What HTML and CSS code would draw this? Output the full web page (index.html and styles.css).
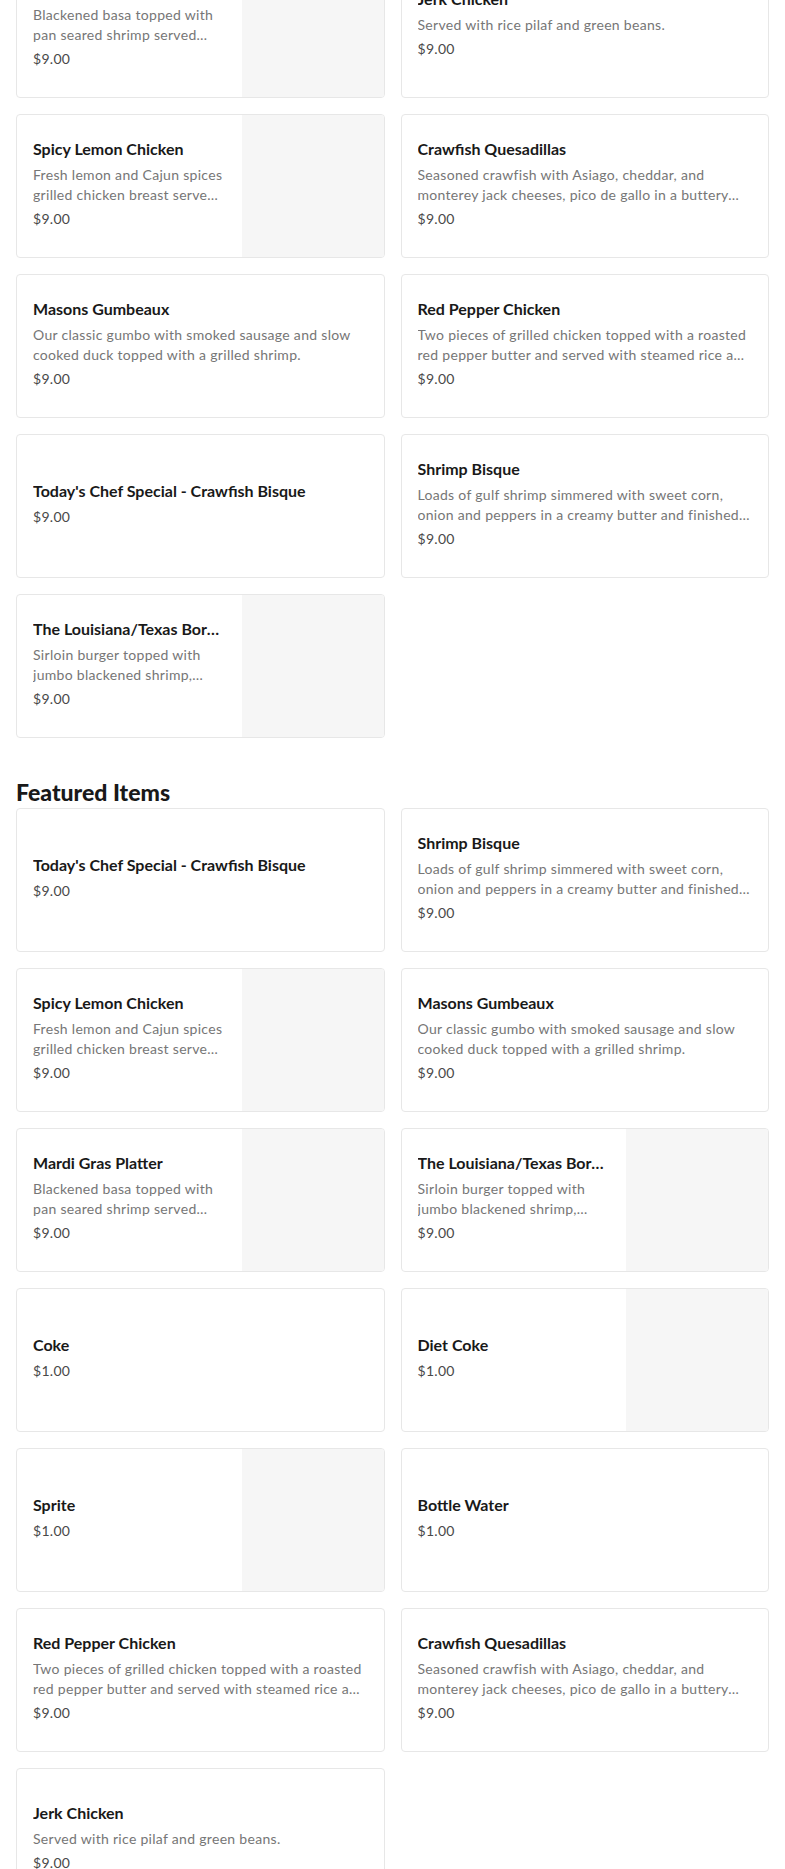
FILE: index.html
```html
<!DOCTYPE html>
<html lang="en">
<head>
    <meta charset="UTF-8">
    <meta name="viewport" content="width=device-width, initial-scale=1.0">
    <title>Menu</title>
    <link rel="stylesheet" href="styles.css">
</head>
<body>
    <div class="menu">
        <section class="section section-first">
            <div class="grid">
                <div class="card">
                    <div class="info">
                        <div class="title">Mardi Gras Platter</div>
                        <div class="desc">Blackened basa topped with pan seared shrimp served with rice pilaf and green beans.</div>
                        <div class="price">$9.00</div>
                    </div>
                    <div class="thumb"></div>
                </div>
                <div class="card">
                    <div class="info">
                        <div class="title">Jerk Chicken</div>
                        <div class="desc">Served with rice pilaf and green beans.</div>
                        <div class="price">$9.00</div>
                    </div>
                </div>
                <div class="card">
                    <div class="info">
                        <div class="title">Spicy Lemon Chicken</div>
                        <div class="desc">Fresh lemon and Cajun spices grilled chicken breast served with rice pilaf and green beans.</div>
                        <div class="price">$9.00</div>
                    </div>
                    <div class="thumb"></div>
                </div>
                <div class="card">
                    <div class="info">
                        <div class="title">Crawfish Quesadillas</div>
                        <div class="desc">Seasoned crawfish with Asiago, cheddar, and monterey jack cheeses, pico de gallo in a buttery flour tortilla.</div>
                        <div class="price">$9.00</div>
                    </div>
                </div>
                <div class="card">
                    <div class="info">
                        <div class="title">Masons Gumbeaux</div>
                        <div class="desc">Our classic gumbo with smoked sausage and slow cooked duck topped with a grilled shrimp.</div>
                        <div class="price">$9.00</div>
                    </div>
                </div>
                <div class="card">
                    <div class="info">
                        <div class="title">Red Pepper Chicken</div>
                        <div class="desc">Two pieces of grilled chicken topped with a roasted red pepper butter and served with steamed rice and green beans.</div>
                        <div class="price">$9.00</div>
                    </div>
                </div>
                <div class="card">
                    <div class="info">
                        <div class="title">Today's Chef Special - Crawfish Bisque</div>
                        <div class="price">$9.00</div>
                    </div>
                </div>
                <div class="card">
                    <div class="info">
                        <div class="title">Shrimp Bisque</div>
                        <div class="desc">Loads of gulf shrimp simmered with sweet corn, onion and peppers in a creamy butter and finished with sherry.</div>
                        <div class="price">$9.00</div>
                    </div>
                </div>
                <div class="card">
                    <div class="info">
                        <div class="title">The Louisiana/Texas Border Burger</div>
                        <div class="desc">Sirloin burger topped with jumbo blackened shrimp, pepper jack cheese and cajun remoulade.</div>
                        <div class="price">$9.00</div>
                    </div>
                    <div class="thumb"></div>
                </div>
            </div>
        </section>

        <section class="section">
            <h2>Featured Items</h2>
            <div class="grid">
                <div class="card">
                    <div class="info">
                        <div class="title">Today's Chef Special - Crawfish Bisque</div>
                        <div class="price">$9.00</div>
                    </div>
                </div>
                <div class="card">
                    <div class="info">
                        <div class="title">Shrimp Bisque</div>
                        <div class="desc">Loads of gulf shrimp simmered with sweet corn, onion and peppers in a creamy butter and finished with sherry.</div>
                        <div class="price">$9.00</div>
                    </div>
                </div>
                <div class="card">
                    <div class="info">
                        <div class="title">Spicy Lemon Chicken</div>
                        <div class="desc">Fresh lemon and Cajun spices grilled chicken breast served with rice pilaf and green beans.</div>
                        <div class="price">$9.00</div>
                    </div>
                    <div class="thumb"></div>
                </div>
                <div class="card">
                    <div class="info">
                        <div class="title">Masons Gumbeaux</div>
                        <div class="desc">Our classic gumbo with smoked sausage and slow cooked duck topped with a grilled shrimp.</div>
                        <div class="price">$9.00</div>
                    </div>
                </div>
                <div class="card">
                    <div class="info">
                        <div class="title">Mardi Gras Platter</div>
                        <div class="desc">Blackened basa topped with pan seared shrimp served with rice pilaf and green beans.</div>
                        <div class="price">$9.00</div>
                    </div>
                    <div class="thumb"></div>
                </div>
                <div class="card">
                    <div class="info">
                        <div class="title">The Louisiana/Texas Border Burger</div>
                        <div class="desc">Sirloin burger topped with jumbo blackened shrimp, pepper jack cheese and cajun remoulade.</div>
                        <div class="price">$9.00</div>
                    </div>
                    <div class="thumb"></div>
                </div>
                <div class="card">
                    <div class="info">
                        <div class="title">Coke</div>
                        <div class="price">$1.00</div>
                    </div>
                </div>
                <div class="card">
                    <div class="info">
                        <div class="title">Diet Coke</div>
                        <div class="price">$1.00</div>
                    </div>
                    <div class="thumb"></div>
                </div>
                <div class="card">
                    <div class="info">
                        <div class="title">Sprite</div>
                        <div class="price">$1.00</div>
                    </div>
                    <div class="thumb"></div>
                </div>
                <div class="card">
                    <div class="info">
                        <div class="title">Bottle Water</div>
                        <div class="price">$1.00</div>
                    </div>
                </div>
                <div class="card">
                    <div class="info">
                        <div class="title">Red Pepper Chicken</div>
                        <div class="desc">Two pieces of grilled chicken topped with a roasted red pepper butter and served with steamed rice and green beans.</div>
                        <div class="price">$9.00</div>
                    </div>
                </div>
                <div class="card">
                    <div class="info">
                        <div class="title">Crawfish Quesadillas</div>
                        <div class="desc">Seasoned crawfish with Asiago, cheddar, and monterey jack cheeses, pico de gallo in a buttery flour tortilla.</div>
                        <div class="price">$9.00</div>
                    </div>
                </div>
                <div class="card">
                    <div class="info">
                        <div class="title">Jerk Chicken</div>
                        <div class="desc">Served with rice pilaf and green beans.</div>
                        <div class="price">$9.00</div>
                    </div>
                </div>
            </div>
        </section>
    </div>
</body>
</html>
```

FILE: styles.css
```css
body {
    margin: 0;
    font-family: Lato, "Open Sans", sans-serif;
    color: #191919;
    background-color: #fff;
}
.menu {
    padding: 0 16px;
}
.section + .section {
    margin-top: 40px;
}
/* page is scrolled, first row is cut off at the top */
.section-first {
    margin-top: -46px;
}
.section h2 {
    margin: 0 0 2px;
    font-size: 23px;
    line-height: 28px;
    font-weight: 900;
    color: #191919;
}
.grid {
    display: grid;
    grid-template-columns: 1fr 1fr;
    gap: 16px;
}
.card {
    display: flex;
    height: 144px;
    box-sizing: border-box;
    border: 1px solid #e7e7e7;
    border-radius: 4px;
    overflow: hidden;
    background-color: #fff;
}
.info {
    flex: 1;
    min-width: 0;
    display: flex;
    flex-direction: column;
    justify-content: center;
    padding: 0 16px 7px;
}
.title {
    font-size: 16px;
    line-height: 24px;
    font-weight: 700;
    white-space: nowrap;
    overflow: hidden;
    text-overflow: ellipsis;
}
.desc {
    margin-top: 4px;
    font-size: 14px;
    line-height: 20px;
    letter-spacing: 0.3px;
    color: #767676;
    display: -webkit-box;
    -webkit-line-clamp: 2;
    -webkit-box-orient: vertical;
    overflow: hidden;
}
.price {
    margin-top: 4px;
    font-size: 14px;
    line-height: 20px;
    letter-spacing: 0.3px;
    color: #494949;
}
.thumb {
    flex: 0 0 142px;
    background-color: #f6f6f6;
}
```
